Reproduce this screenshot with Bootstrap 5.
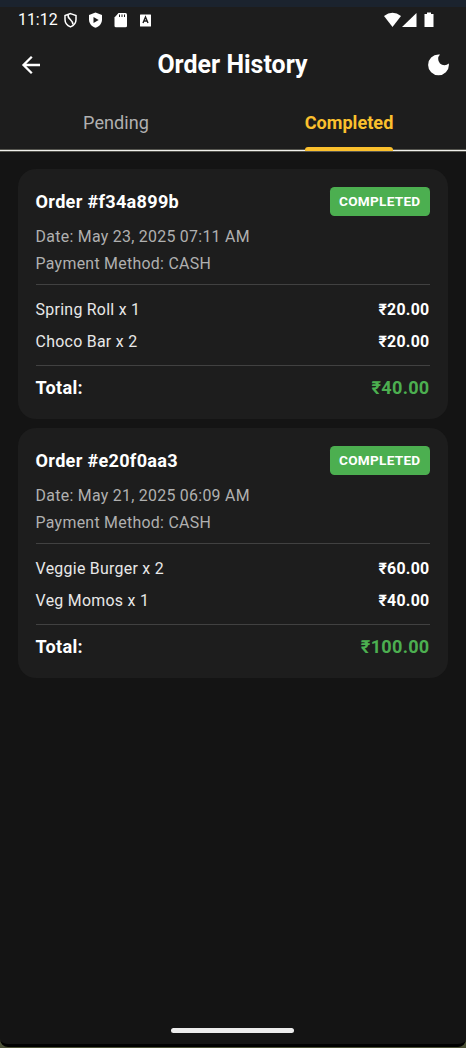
<!DOCTYPE html>
<html lang="en">
<head>
<meta charset="utf-8">
<meta name="viewport" content="width=device-width, initial-scale=1">
<title>Order History</title>
<link href="https://cdn.jsdelivr.net/npm/bootstrap@5.3.0/dist/css/bootstrap.min.css" rel="stylesheet">
<style>
html{background:#4b5036}
body{font-family:Roboto,sans-serif;background:#4b5036;color:#fff;letter-spacing:.28px;font-size:15.9px;line-height:22px;overflow:hidden}
.phone{height:1047px;background:#141414;border-bottom:3px solid #000;border-radius:0 0 8px 8px;overflow:hidden}
.edge{height:7px;background:#1b232e}
.topbar{background:#1d1d1d;box-shadow:inset 0 -1px #f0f0ec,inset 0 -2px #55554f,0 1px #55554f;height:144px}
.status{height:26px;padding:0 31px 0 18px;font-size:15.9px;letter-spacing:0}
.status svg,.appbar svg{display:block}
.appbar{height:63px;padding:0 16px 0 19px}
.appbar h1{font-size:24.9px;line-height:30px;letter-spacing:.03px;transform:translateX(-2px)}
.tabs{height:55px}
.tabs .nav-link{padding:0 1px 0 0;height:55px;line-height:54px;font-size:18.1px;letter-spacing:.02px;color:#b0b0b0}
.tabs .nav-link.active{color:#fbc02d;font-weight:700}
.tabs .active span{display:inline-block;height:55px;position:relative}
.tabs .active span::after{content:"";position:absolute;left:0;right:0;bottom:0;height:4px;background:#fbc02d;border-radius:3px 3px 0 0}
.orders{padding:18px 18.5px 18px 17.600px;gap:9px}
.order{background:#1d1d1d;border:0;border-radius:18px;height:250px;padding:18px 18px 0;color:#fff}
.order h2{font-size:18.1px;line-height:29px;margin:0;letter-spacing:.3px}
.done{background:#4caf50;border-radius:4.5px;font-size:13.6px;line-height:29px;height:29px;padding:0 9px;font-weight:700;letter-spacing:.28px}
.meta{color:#b0b0b0;line-height:27px;margin-top:7px;height:61px}
.rule{height:1px;background:#414141}
.lines{padding-top:9px;line-height:32px;height:80px;color:#e8e8e8}
.lines strong{color:#fff}
.total{font-size:18.1px;line-height:26px;padding-top:9px}
.sum{color:#4caf50}
.home{width:123px;height:5px;background:#ececec;margin-bottom:11px;transform:translateX(-1px)}
</style>
</head>
<body>
<div class="phone d-flex flex-column">
  <div class="edge"></div>
  <header class="topbar">
    <div class="status d-flex align-items-center">
      <span>11:12</span>
      <svg class="ms-1" width="97" height="18" viewBox="0 0 97 18" fill="#fff">
        <path d="M8.500 2.600L14 4.500V8.400C14 11.900 11.800 14.500 8.500 15.900C5.200 14.500 3 11.900 3 8.400V4.500Z" fill="none" stroke="#fff" stroke-width="1.500"/>
        <path d="M6 4C5.500 8.500 11.500 9 11 13.500" fill="none" stroke="#fff" stroke-width="1.600"/>
        <path d="M33.500 1.500L40 4V8.500C40 12.500 37.300 15.500 33.500 16.700C29.700 15.500 27 12.500 27 8.500V4Z"/><path d="M31.500 6L36.700 9L31.500 12Z" fill="#1d1d1d"/>
        <path d="M56.500 2H63.500Q65 2 65 3.500V15Q65 16.300 63.500 16.300H54Q52.500 16.300 52.500 15V6.500Z"/><path d="M57.500 3.500V6M60 3.500V6M62.500 3.500V6" stroke="#1d1d1d"/>
        <rect x="78" y="3.500" width="11" height="12" rx=".5"/><path d="M81 12L83.500 6L86 12M81.800 10H85.200" fill="none" stroke="#1d1d1d" stroke-width="1.400"/>
      </svg>
      <svg class="ms-auto" width="52" height="18" viewBox="0 0 52 18" fill="#fff">
        <path d="M1 5Q9.500-1.600 18 5L9.500 16Z"/><path d="M33.500 2V16H19Z"/><path d="M44 1.600H48V3H50.500V16H41.500V3H44Z"/>
      </svg>
    </div>
    <div class="appbar d-flex align-items-center justify-content-between">
      <svg width="24" height="24" viewBox="0 0 24 24" fill="none" stroke="#fff" stroke-width="2.300"><path d="M21 12H4.500M12.800 3.800L4.500 12L12.800 20.200"/></svg>
      <h1 class="m-0 fw-bold">Order History</h1>
      <svg width="24" height="24" viewBox="0 0 24 24" fill="#fff"><path d="M12.500 1.500A10.400 10.400 0 1 0 22.900 11.900C22.900 11.400 22.850 10.900 22.800 10.400A6.200 6.200 0 1 1 14 1.600C13.500 1.550 13 1.500 12.500 1.500Z"/></svg>
    </div>
    <nav class="tabs nav nav-fill flex-nowrap">
      <a class="nav-link w-50" href="#">Pending</a>
      <a class="nav-link w-50 active" href="#"><span>Completed</span></a>
    </nav>
  </header>
  <main class="orders d-flex flex-column">
    <article class="order card">
      <div class="d-flex justify-content-between"><h2 class="fw-bold">Order #f34a899b</h2><span class="done">COMPLETED</span></div>
      <div class="meta">Date: May 23, 2025 07:11 AM<br>Payment Method: CASH</div>
      <div class="rule"></div>
      <div class="lines">
        <div class="d-flex justify-content-between"><span>Spring Roll x 1</span><strong>₹20.00</strong></div>
        <div class="d-flex justify-content-between"><span>Choco Bar x 2</span><strong>₹20.00</strong></div>
      </div>
      <div class="rule"></div>
      <div class="total d-flex justify-content-between fw-bold"><span>Total:</span><span class="sum">₹40.00</span></div>
    </article>
    <article class="order card">
      <div class="d-flex justify-content-between"><h2 class="fw-bold">Order #e20f0aa3</h2><span class="done">COMPLETED</span></div>
      <div class="meta">Date: May 21, 2025 06:09 AM<br>Payment Method: CASH</div>
      <div class="rule"></div>
      <div class="lines">
        <div class="d-flex justify-content-between"><span>Veggie Burger x 2</span><strong>₹60.00</strong></div>
        <div class="d-flex justify-content-between"><span>Veg Momos x 1</span><strong>₹40.00</strong></div>
      </div>
      <div class="rule"></div>
      <div class="total d-flex justify-content-between fw-bold"><span>Total:</span><span class="sum">₹100.00</span></div>
    </article>
  </main>
  <div class="home rounded-pill mx-auto mt-auto"></div>
</div>
<script src="https://cdn.jsdelivr.net/npm/bootstrap@5.3.0/dist/js/bootstrap.bundle.min.js"></script>
</body>
</html>
